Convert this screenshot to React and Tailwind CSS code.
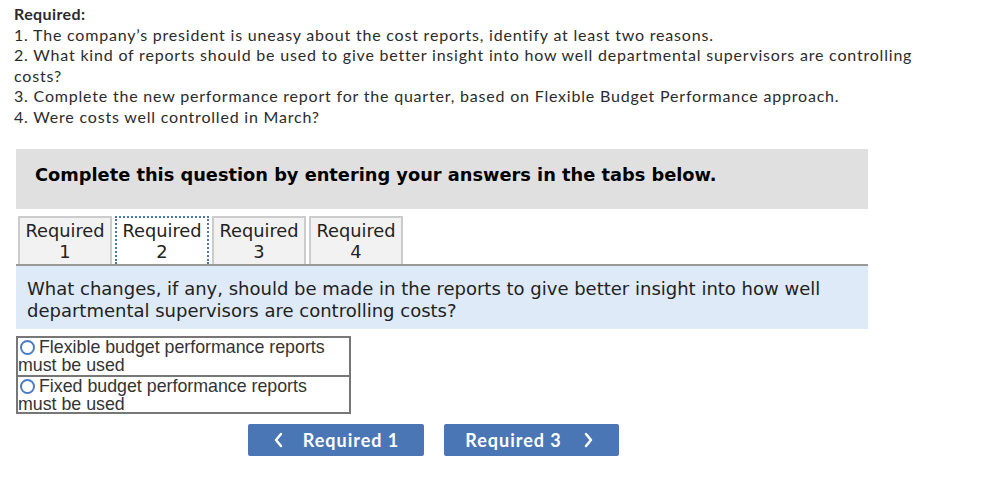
import React from 'react'

const tabs = ['1', '2', '3', '4']

const options = [
  'Flexible budget performance reports must be used',
  'Fixed budget performance reports must be used',
]

const Radio = () => (
  <span className="inline-block w-[15px] h-[15px] rounded-full border-2 border-[#4a7bc4] align-[-2px] ml-[2px] mr-[4px]" />
)

const App = () => {
  return (
    <div className="bg-white w-[1002px] h-[494px] overflow-hidden text-[#2b2b2b]">
      <div className="px-[14px] pt-[4px] font-['Lato',sans-serif] text-[16px] tracking-[0.8px] leading-[20.5px]">
        <p className="font-bold tracking-[0.4px]">Required:</p>
        <p>1. The company’s president is uneasy about the cost reports, identify at least two reasons.</p>
        <p>
          2. What kind of reports should be used to give better insight into how well departmental supervisors are controlling
          <br />
          costs?
        </p>
        <p>3. Complete the new performance report for the quarter, based on Flexible Budget Performance approach.</p>
        <p>4. Were costs well controlled in March?</p>
      </div>

      <div className="ml-[16px] w-[852px] mt-[22px]">
        <div className="bg-[#e0e0e0] h-[60px] pt-[15px] pl-[19px] font-['DejaVu_Sans',Verdana,sans-serif] font-bold text-[17.8px] leading-[21px] text-black">
          Complete this question by entering your answers in the tabs below.
        </div>

        <div className="mt-[7px] flex items-end pl-[2px] gap-[3px] border-b-2 border-[#999]">
          {tabs.map((t, i) => (
            <div
              key={t}
              className={`h-[48px] w-[94px] flex flex-col items-center justify-center font-['DejaVu_Sans',Verdana,sans-serif] text-[17.8px] leading-[21px] text-[#222] ${
                i === 1
                  ? 'bg-white border-2 border-dotted border-[#4a77b4] border-b-0'
                  : 'bg-[#f2f2f2] border-2 border-[#cccccc] border-b-0'
              }`}
            >
              <span>Required</span>
              <span>{t}</span>
            </div>
          ))}
        </div>

        <div className="bg-[#deeaf7] h-[63px] pl-[11px] pt-[12px] font-['DejaVu_Sans',Verdana,sans-serif] text-[18px] leading-[22px] text-[#222]">
          What changes, if any, should be made in the reports to give better insight into how well
          <br />
          departmental supervisors are controlling costs?
        </div>

        <div className="mt-[7px] w-[335px] border-2 border-[#777] font-['Liberation_Sans',Arial,sans-serif] text-[17.8px] leading-[18px] text-[#333]">
          {options.map((o, i) => (
            <div key={i} className={`h-[37px] ${i > 0 ? 'border-t-2 border-[#777]' : ''}`}>
              <Radio />
              {o}
            </div>
          ))}
        </div>
      </div>

      <div className="mt-[10px] ml-[248px] flex gap-[20px] font-['Lato',sans-serif] font-bold text-[18px] tracking-[1px] text-white">
        <button className="w-[176px] h-[32px] bg-[#4a76b5] rounded-[2px] flex items-center justify-center gap-[18px]">
          <svg width="12" height="16" viewBox="0 0 12 16" fill="none" stroke="white" strokeWidth="2.5" strokeLinecap="round" strokeLinejoin="round">
            <path d="M8 2 L3 8 L8 14" />
          </svg>
          <span>Required 1</span>
        </button>
        <button className="w-[175px] h-[32px] bg-[#4a76b5] rounded-[2px] flex items-center justify-center gap-[20px] pr-[4px]">
          <span>Required 3</span>
          <svg width="12" height="16" viewBox="0 0 12 16" fill="none" stroke="white" strokeWidth="2.5" strokeLinecap="round" strokeLinejoin="round">
            <path d="M4 2 L9 8 L4 14" />
          </svg>
        </button>
      </div>
    </div>
  )
}

export default App
